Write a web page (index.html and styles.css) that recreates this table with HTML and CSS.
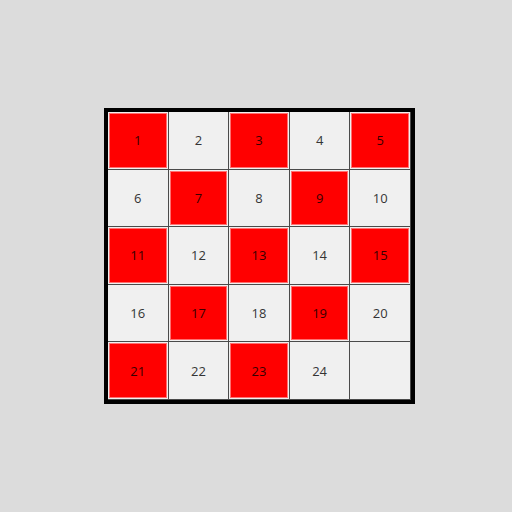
FILE: index.html
```html
<!DOCTYPE html>
<html>
<head>
<meta charset="utf-8">
<link rel="stylesheet" href="styles.css">
</head>
<body>
<div class="board">
  <div class="cell"><div class="fill red">1</div></div>
  <div class="cell"><div class="fill">2</div></div>
  <div class="cell"><div class="fill red">3</div></div>
  <div class="cell"><div class="fill">4</div></div>
  <div class="cell"><div class="fill red">5</div></div>
  <div class="cell"><div class="fill">6</div></div>
  <div class="cell"><div class="fill red">7</div></div>
  <div class="cell"><div class="fill">8</div></div>
  <div class="cell"><div class="fill red">9</div></div>
  <div class="cell"><div class="fill">10</div></div>
  <div class="cell"><div class="fill red">11</div></div>
  <div class="cell"><div class="fill">12</div></div>
  <div class="cell"><div class="fill red">13</div></div>
  <div class="cell"><div class="fill">14</div></div>
  <div class="cell"><div class="fill red">15</div></div>
  <div class="cell"><div class="fill">16</div></div>
  <div class="cell"><div class="fill red">17</div></div>
  <div class="cell"><div class="fill">18</div></div>
  <div class="cell"><div class="fill red">19</div></div>
  <div class="cell"><div class="fill">20</div></div>
  <div class="cell"><div class="fill red">21</div></div>
  <div class="cell"><div class="fill">22</div></div>
  <div class="cell"><div class="fill red">23</div></div>
  <div class="cell"><div class="fill">24</div></div>
  <div class="cell"><div class="fill"></div></div>
</div>
</body>
</html>
```
FILE: styles.css
```css
html, body {
  margin: 0;
  padding: 0;
  background: #dcdcdc;
}
body {
  padding: 108px 0 0 104px;
  font-family: "Noto Sans", "Open Sans", sans-serif;
  font-size: 13px;
}
.board {
  width: 303px;
  height: 288px;
  border: 4px solid #000;
  background: #f0f0f0;
  display: grid;
  grid-template-columns: repeat(5, 1fr);
  grid-template-rows: repeat(5, 1fr);
}
.cell {
  box-sizing: border-box;
  border-right: 1px solid #4a4a4a;
  border-bottom: 1px solid #4a4a4a;
  padding: 1px;
  display: flex;
}
.fill {
  flex: 1;
  display: flex;
  align-items: center;
  justify-content: center;
  color: rgba(0, 0, 0, 0.78);
  background: #f0f0f0;
}
.fill.red {
  background: #ff0000;
  box-shadow: inset 0 0 0 1px #ff7070;
}
```
